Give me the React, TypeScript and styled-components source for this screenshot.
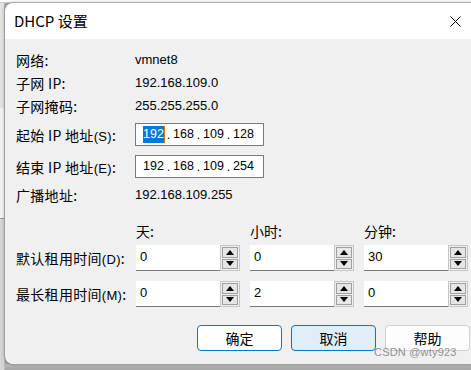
import React from "react";
import styled, { createGlobalStyle } from "styled-components";

const GlobalStyle = createGlobalStyle`
  html, body { margin: 0; padding: 0; }
  body {
    width: 471px; height: 370px; overflow: hidden;
    background: #c8c8c8;
    font-family: "Noto Sans CJK SC", "Liberation Sans", sans-serif;
  }
`;

const CJK = `"Noto Sans CJK SC", "Liberation Sans", sans-serif`;
const LAT = `"Liberation Sans", "Noto Sans CJK SC", sans-serif`;

const Screen = styled.div`
  width: 471px;
  height: 370px;
  overflow: hidden;
  display: grid;
  grid-template-columns: 5px 466px;
  grid-template-rows: 3px 361px 6px;
  background: #a9a9a9;
`;

const TopStrip = styled.div`
  grid-column: 1 / 3;
  grid-row: 1;
  background: #ffffff;
  border-bottom: 1px solid #d0d0d0;
`;

const LeftStrip = styled.div`
  grid-column: 1;
  grid-row: 2 / 4;
  background: linear-gradient(
    to bottom,
    #e4e4e4 0px, #e4e4e4 105px,
    #f4f4f4 105px, #f4f4f4 215px,
    #9a9a9a 215px, #9a9a9a 216px,
    #d6d6d6 216px
  );
  box-shadow: inset -1px 0 0 #b8b8b8;
`;

const BottomBand = styled.div`
  grid-column: 2;
  grid-row: 3;
  background: linear-gradient(to bottom, #bdbdbd, #a6a6a6);
`;

const Dialog = styled.div`
  grid-column: 2;
  grid-row: 2;
  width: 480px;
  display: flex;
  flex-direction: column;
  border-radius: 8px 8px 0 8px;
  overflow: hidden;
  box-shadow: 0 0 4px rgba(0, 0, 0, 0.35);
  position: relative;
`;

const TitleBar = styled.div`
  height: 36px;
  background: #ffffff;
  display: flex;
  align-items: center;
  padding-left: 9px;
  padding-right: 24px;
`;

const Title = styled.div`
  font-family: ${CJK};
  font-size: 15px;
  color: #000;
  flex: 1;
  padding-bottom: 2px;
`;

const CloseBtn = styled.div`
  width: 12px;
  height: 12px;
  display: flex;
  align-items: center;
  justify-content: center;
`;

const Body = styled.div`
  height: 325px;
  background: #f0f0f0;
  padding: 9px 0 0 11px;
  box-sizing: border-box;
  display: flex;
  flex-direction: column;
`;

const Row = styled.div<{ $h: number; $mt?: number }>`
  height: ${(p) => p.$h}px;
  margin-top: ${(p) => p.$mt ?? 0}px;
  display: flex;
  align-items: center;
`;

const Label = styled.div`
  width: 119px;
  flex: none;
  font-family: ${CJK};
  font-size: 14px;
  color: #000;
  white-space: nowrap;
  letter-spacing: 0.3px;
`;

const Small = styled.span`
  font-family: ${LAT};
  font-size: 13px;
`;

const Value = styled.div`
  font-family: ${LAT};
  font-size: 13px;
  color: #000;
`;

const IpBox = styled.div<{ $h: number }>`
  width: 129px;
  height: ${(p) => p.$h}px;
  box-sizing: border-box;
  border: 1px solid #7a7a7a;
  background: #fff;
  display: flex;
  align-items: center;
  padding-left: 7px;
  font-family: ${LAT};
  font-size: 12.5px;
  color: #000;
  white-space: nowrap;
`;

const Seg = styled.span<{ $sel?: boolean }>`
  display: inline-block;
  width: 21px;
  text-align: center;
  background: ${(p) => (p.$sel ? "#0078d7" : "transparent")};
  color: ${(p) => (p.$sel ? "#fff" : "#000")};
  box-shadow: ${(p) => (p.$sel ? "1px 0 0 #e06c00" : "none")};
  line-height: 17px;
`;

const Dot = styled.span`
  display: inline-block;
  width: 9px;
  text-align: center;
`;

const SpinArea = styled.div<{ $ml: number }>`
  display: flex;
  gap: 10px;
  margin-left: ${(p) => p.$ml}px;
`;

const ColHead = styled.div`
  width: 104px;
  font-family: ${CJK};
  font-size: 14px;
  color: #000;
`;

const Spin = styled.div`
  display: flex;
  width: 104px;
  height: 26px;
`;

const SpinInput = styled.div`
  width: 84px;
  height: 26px;
  box-sizing: border-box;
  background: #fff;
  border-bottom: 1px solid #7a7a7a;
  font-family: ${LAT};
  font-size: 13px;
  color: #000;
  padding: 4px 0 0 4px;
`;

const SpinBtns = styled.div`
  width: 20px;
  height: 26px;
  box-sizing: border-box;
  border: 1px solid #c6c6c6;
  background: #f0f0f0;
  display: flex;
  flex-direction: column;
  padding: 1px;
  gap: 1px;
`;

const SpinBtn = styled.div`
  flex: 1;
  box-sizing: border-box;
  border: 1px solid #a0a0a0;
  background: #e6e6e6;
  display: flex;
  align-items: center;
  justify-content: center;
`;

const Buttons = styled.div`
  display: flex;
  gap: 9px;
  margin-top: 18px;
  margin-left: 181px;
`;

const Btn = styled.div<{ $variant: "primary" | "focus" | "normal" }>`
  width: 85px;
  height: 26px;
  box-sizing: border-box;
  border-radius: 4px;
  border: 1px solid
    ${(p) => (p.$variant === "normal" ? "#d0d0d0" : "#0078d4")};
  background: ${(p) =>
    p.$variant === "focus" ? "#e0eef9" : p.$variant === "normal" ? "#fdfdfd" : "#ffffff"};
  display: flex;
  align-items: center;
  justify-content: center;
  font-family: ${CJK};
  font-size: 14px;
  color: #000;
`;

const Watermark = styled.div`
  position: absolute;
  left: 369px;
  top: 343px;
  font-family: ${LAT};
  font-size: 11px;
  color: rgba(110, 110, 110, 0.75);
  letter-spacing: 0.2px;
`;

const Up = () => (
  <svg width="8" height="5" viewBox="0 0 8 5">
    <polygon points="0,5 8,5 4,0" fill="#000" />
  </svg>
);
const Down = () => (
  <svg width="8" height="5" viewBox="0 0 8 5">
    <polygon points="0,0 8,0 4,5" fill="#000" />
  </svg>
);

const SpinBox = ({ v }: { v: string }) => (
  <Spin>
    <SpinInput>{v}</SpinInput>
    <SpinBtns>
      <SpinBtn>
        <Up />
      </SpinBtn>
      <SpinBtn>
        <Down />
      </SpinBtn>
    </SpinBtns>
  </Spin>
);

const Ip = ({ parts, sel }: { parts: string[]; sel?: boolean }) => (
  <>
    {parts.map((p, i) => (
      <React.Fragment key={i}>
        {i > 0 && <Dot>.</Dot>}
        <Seg $sel={sel && i === 0}>{p}</Seg>
      </React.Fragment>
    ))}
  </>
);

export default function App() {
  return (
    <>
      <GlobalStyle />
      <Screen>
        <TopStrip />
        <LeftStrip />
        <Dialog>
          <TitleBar>
            <Title>DHCP 设置</Title>
            <CloseBtn>
              <svg width="11" height="11" viewBox="0 0 11 11">
                <path d="M0.5 0.5 L10.5 10.5 M10.5 0.5 L0.5 10.5" stroke="#000" strokeWidth="1" />
              </svg>
            </CloseBtn>
          </TitleBar>
          <Body>
            <Row $h={23}>
              <Label>网络:</Label>
              <Value>vmnet8</Value>
            </Row>
            <Row $h={23}>
              <Label>子网 IP:</Label>
              <Value>192.168.109.0</Value>
            </Row>
            <Row $h={23}>
              <Label>子网掩码:</Label>
              <Value>255.255.255.0</Value>
            </Row>
            <Row $h={23} $mt={6}>
              <Label>
                起始 IP 地址<Small>(S)</Small>:
              </Label>
              <IpBox $h={23}>
                <Ip parts={["192", "168", "109", "128"]} sel />
              </IpBox>
            </Row>
            <Row $h={23} $mt={9}>
              <Label>
                结束 IP 地址<Small>(E)</Small>:
              </Label>
              <IpBox $h={23}>
                <Ip parts={["192", "168", "109", "254"]} />
              </IpBox>
            </Row>
            <Row $h={23} $mt={5}>
              <Label>广播地址:</Label>
              <Value>192.168.109.255</Value>
            </Row>
            <Row $h={22} $mt={14}>
              <SpinArea $ml={120}>
                <ColHead>天:</ColHead>
                <ColHead>小时:</ColHead>
                <ColHead>分钟:</ColHead>
              </SpinArea>
            </Row>
            <Row $h={26} $mt={3}>
              <Label>
                默认租用时间<Small>(D)</Small>:
              </Label>
              <SpinArea $ml={1}>
                <SpinBox v="0" />
                <SpinBox v="0" />
                <SpinBox v="30" />
              </SpinArea>
            </Row>
            <Row $h={26} $mt={10}>
              <Label>
                最长租用时间<Small>(M)</Small>:
              </Label>
              <SpinArea $ml={1}>
                <SpinBox v="0" />
                <SpinBox v="2" />
                <SpinBox v="0" />
              </SpinArea>
            </Row>
            <Buttons>
              <Btn $variant="primary">确定</Btn>
              <Btn $variant="focus">取消</Btn>
              <Btn $variant="normal">帮助</Btn>
            </Buttons>
          </Body>
          <Watermark>CSDN @wty923</Watermark>
        </Dialog>
        <BottomBand />
      </Screen>
    </>
  );
}
